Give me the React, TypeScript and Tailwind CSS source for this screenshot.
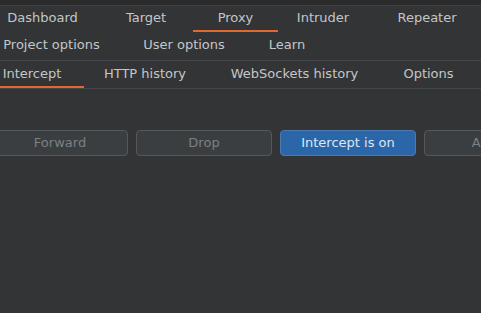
import React from "react";

const topTabs = [
	{ label: "Dashboard", w: "w-[113px]" },
	{ label: "Target", w: "w-[94px]" },
	{ label: "Proxy", w: "w-[85px]", active: true },
	{ label: "Intruder", w: "w-[90px]" },
	{ label: "Repeater", w: "w-[118px]" },
];

const secondTabs = [
	{ label: "Project options", w: "w-[133px]" },
	{ label: "User options", w: "w-[132px]" },
	{ label: "Learn", w: "w-[74px]" },
];

const proxyTabs = [
	{ label: "Intercept", w: "w-[104px]", active: true },
	{ label: "HTTP history", w: "w-[122px]" },
	{ label: "WebSockets history", w: "w-[177px]" },
	{ label: "Options", w: "w-[91px]" },
];

function Tab({ label, w, active, h }: { label: string; w: string; active?: boolean; h: string }) {
	return (
		<div
			className={`${w} ${h} shrink-0 flex items-center justify-center border-b-2 ${
				active ? "border-[#e3682f]" : "border-transparent"
			}`}
		>
			{label}
		</div>
	);
}

export default function App() {
	return (
		<div
			className="w-[481px] h-[313px] overflow-hidden bg-[#333436] text-[13px] text-[#c4c6c8]"
			style={{ fontFamily: '"DejaVu Sans", sans-serif' }}
		>
			<div className="h-[5px] bg-[#2b2b2c]" />
			<div className="h-px bg-[#3f4042]" />
			<div className="flex ml-[-14px]">
				{topTabs.map(t => (
					<Tab key={t.label} {...t} h="h-[26px]" />
				))}
			</div>
			<div className="flex ml-[-15px] h-[28px]">
				{secondTabs.map(t => (
					<Tab key={t.label} {...t} h="h-[28px]" />
				))}
			</div>
			<div className="h-px bg-[#45474a]" />
			<div className="flex ml-[-20px]">
				{proxyTabs.map(t => (
					<Tab key={t.label} {...t} h="h-[27px]" />
				))}
			</div>
			<div className="h-px bg-[#45474a]" />
			<div className="flex gap-[8px] ml-[-8px] mt-[41px]">
				<button className="w-[136px] h-[26px] shrink-0 rounded-[4px] border border-[#56595c] bg-[#3b3e40] text-[#7c8083]">
					Forward
				</button>
				<button className="w-[136px] h-[26px] shrink-0 rounded-[4px] border border-[#56595c] bg-[#3b3e40] text-[#7c8083]">
					Drop
				</button>
				<button className="w-[136px] h-[26px] shrink-0 rounded-[4px] border border-[#4c7ab0] bg-[#2b67a8] text-[#dde8f4]">
					Intercept is on
				</button>
				<button className="w-[136px] h-[26px] shrink-0 rounded-[4px] border border-[#56595c] bg-[#3b3e40] text-[#7c8083]">
					Action
				</button>
			</div>
		</div>
	);
}
